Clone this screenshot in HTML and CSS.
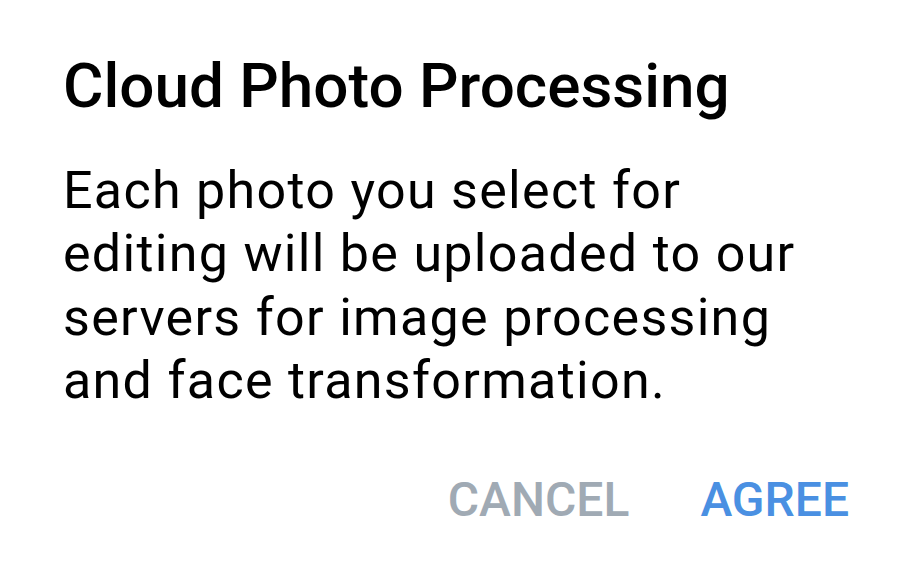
FILE: index.html
```html
<!DOCTYPE html>
<html>

<head>
  <meta charset="UTF-8">
  <meta name="viewport" content="width=device-width, initial-scale=1">
  <title>Cloud Photo Processing</title>
  <link rel="stylesheet" href="styles.css">
</head>

<body>
  <div class="dialog">
    <h1 class="dialog-title">Cloud Photo Processing</h1>
    <p class="dialog-text">Each photo you select for editing will be uploaded to our servers for image processing and face transformation.</p>
    <div class="dialog-actions">
      <button class="btn btn-cancel">CANCEL</button>
      <button class="btn btn-agree">AGREE</button>
    </div>
  </div>
</body>

</html>
```

FILE: styles.css
```css
body {
  margin: 0;
  background: #fff;
  font-family: Roboto, "Noto Sans", sans-serif;
}

.dialog {
  width: 909px;
  height: 570px;
  box-sizing: border-box;
  padding: 48px 60px 0 63px;
}

.dialog-title {
  margin: 0;
  font-size: 62px;
  font-weight: 500;
  line-height: 76px;
  color: #000;
}

.dialog-text {
  margin: 35px 0 0;
  font-size: 52px;
  line-height: 63.3px;
  letter-spacing: 1.3px;
  color: #000;
}

.dialog-actions {
  display: flex;
  justify-content: flex-end;
  gap: 71px;
  margin-top: 60px;
}

.btn {
  padding: 0;
  border: none;
  background: none;
  font-family: inherit;
  font-size: 48px;
  font-weight: 500;
  line-height: 56px;
}

.btn-cancel {
  color: #a0aab4;
}

.btn-agree {
  color: #4a90e2;
}
```
